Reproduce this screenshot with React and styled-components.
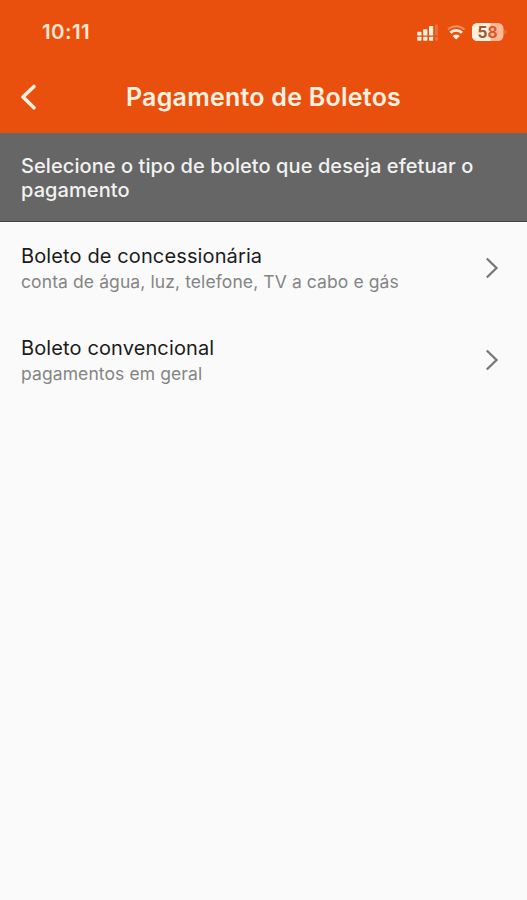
import React from 'react'
import styled, { createGlobalStyle } from 'styled-components'

const Colors = {
    Orange: '#e9500e',
    Gray: '#666666',
    Line: '#444444',
    Background: '#fafafa',
    Cream: '#fff0e0',
}

const GlobalStyle = createGlobalStyle`
    body {
        margin: 0;
        background: ${Colors.Background};
        font-family: Inter, "Liberation Sans", sans-serif;
    }
`

const Screen = styled.div`
    display: flex;
    flex-direction: column;
    width: 527px;
    height: 900px;
    overflow: hidden;
    background: ${Colors.Background};
`

const StatusBar = styled.div`
    display: flex;
    align-items: center;
    justify-content: space-between;
    box-sizing: border-box;
    height: 64px;
    padding: 0 20px 0 42px;
    background: ${Colors.Orange};
`

const Time = styled.span`
    font-size: 20.5px;
    font-weight: 600;
    line-height: 24px;
    letter-spacing: 0.4px;
    color: #ffe6d2;
`

const Header = styled.header`
    display: grid;
    grid-template-columns: 64px 1fr 64px;
    align-items: center;
    box-sizing: border-box;
    height: 69px;
    padding-bottom: 3px;
    background: ${Colors.Orange};
`

const BackButton = styled.button`
    display: flex;
    margin: 0;
    padding: 0 0 0 18px;
    border: 0;
    background: none;
`

const Title = styled.h1`
    margin: 0;
    font-size: 25px;
    font-weight: 600;
    line-height: 32px;
    letter-spacing: 0.25px;
    text-align: center;
    white-space: nowrap;
    color: ${Colors.Cream};
`

const Notice = styled.p`
    box-sizing: border-box;
    height: 89px;
    margin: 0;
    padding: 21px 21px 0;
    border-bottom: 1px solid ${Colors.Line};
    background: ${Colors.Gray};
    font-size: 20px;
    font-weight: 500;
    line-height: 24px;
    letter-spacing: 0.08px;
    color: #f2f2f2;
`

const List = styled.div`
    display: flex;
    flex-direction: column;
`

const Row = styled.div`
    display: flex;
    align-items: center;
    justify-content: space-between;
    box-sizing: border-box;
    height: 92px;
    padding: 0 28px 0 21px;
`

const Content = styled.div`
    padding-top: 2px;
`

const Label = styled.div`
    font-size: 20px;
    line-height: 26px;
    letter-spacing: 0.12px;
    color: #1c1c1c;
`

const Detail = styled.div`
    font-size: 17.5px;
    line-height: 26px;
    letter-spacing: 0.1px;
    color: #858585;
`

const StatusIcons = () => (
    <svg width="90" height="24" viewBox="417 20 90 24">
        <g fill={Colors.Cream}>
            <rect x="417.3" y="31.8" width="4.2" height="3.8" rx="0.6" />
            <rect x="423.2" y="29.2" width="4.2" height="6.4" rx="0.6" />
            <rect x="429" y="26" width="4.2" height="9.6" rx="0.6" />
            <rect x="417.3" y="36.7" width="4.2" height="4" rx="0.6" />
            <rect x="423.2" y="36.7" width="4.2" height="4" rx="0.6" />
            <rect x="429" y="36.7" width="4.2" height="4" rx="0.6" />
        </g>
        <g fill="#f06d38">
            <rect x="435" y="24.5" width="3" height="11.1" rx="0.6" />
            <rect x="435" y="36.7" width="3" height="4" rx="0.6" />
        </g>
        <path d="M448 29.5a12 12 0 0 1 16.5 0" fill="none" stroke="#f58e60" strokeWidth="2" />
        <path d="M450.4 32.8a8.3 8.3 0 0 1 11.6 0" fill="none" stroke={Colors.Cream} strokeWidth="2.8" />
        <path d="M452.6 36a5 5 0 0 1 7.2 0l-3.6 3.6z" fill={Colors.Cream} />
        <rect x="472" y="23" width="31.5" height="18" rx="5.5" fill="#ffb997" />
        <path d="M477.5 23H490.500V41H477.5a5.5 5.5 0 0 1 -5.500 -5.500V28.500a5.500 5.500 0 0 1 5.500 -5.500z" fill={Colors.Cream} />
        <path d="M504.7 29.5q2.3 2.500 0 5z" fill="#f58e60" />
        <text x="487.5" y="37.700" fontSize="15.500" fontWeight="700" textAnchor="middle">
            <tspan fill="#9a5a34">5</tspan>
            <tspan fill="#d9582a">8</tspan>
        </text>
    </svg>
)

const BackIcon = () => (
    <svg width="22" height="30" viewBox="0 0 22 30" fill="none" stroke={Colors.Cream} strokeWidth="3.6" strokeLinecap="round" strokeLinejoin="round">
        <path d="M16 4.5L5 15L16 25.8" />
    </svg>
)

const NextIcon = () => (
    <svg width="14" height="24" viewBox="0 0 14 24" fill="none" stroke="#777777" strokeWidth="2.3">
        <path d="M1.8 2.5L11.5 12L1.8 21.5" />
    </svg>
)

const Item = (props) => {
    return <Row>
        <Content>
            <Label>{props.label}</Label>
            <Detail>{props.detail}</Detail>
        </Content>
        <NextIcon />
    </Row>
}

const App = () => {
    return <Screen>
        <GlobalStyle />
        <StatusBar>
            <Time>10:11</Time>
            <StatusIcons />
        </StatusBar>
        <Header>
            <BackButton aria-label="Voltar"><BackIcon /></BackButton>
            <Title>Pagamento de Boletos</Title>
        </Header>
        <Notice>Selecione o tipo de boleto que deseja efetuar o pagamento</Notice>
        <List>
            <Item label="Boleto de concessionária" detail="conta de água, luz, telefone, TV a cabo e gás" />
            <Item label="Boleto convencional" detail="pagamentos em geral" />
        </List>
    </Screen>
}

export default App
